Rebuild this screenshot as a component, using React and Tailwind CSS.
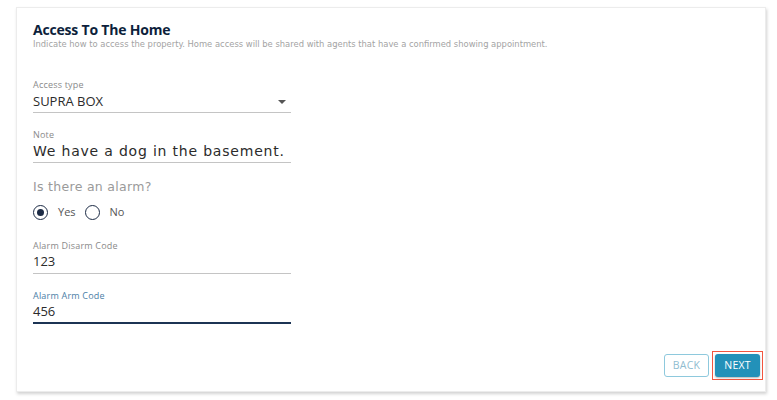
import { useState } from 'react';

function Field({ label, value, labelClass = 'text-[#8a8a8a]', lineClass = 'border-b border-[#c4c4c4]', valueClass = '', arrow = false }) {
  return (
    <div className="w-[258px]">
      <div className={`text-[9px] leading-[12px] tracking-[0.2px] ${labelClass}`}>{label}</div>
      <div className={`flex items-center justify-between h-[22px] ${lineClass}`}>
        <span className={`whitespace-nowrap text-[13px] text-[#2b2b2b] ${valueClass}`}>{value}</span>
        {arrow && (
          <svg width="10" height="6" viewBox="0 0 10 6" className="mr-[4px]">
            <path d="M1 1h8L5 5z" fill="#555" />
          </svg>
        )}
      </div>
    </div>
  );
}

function Radio({ checked, label }) {
  return (
    <label className="flex items-center gap-[10px]">
      <span className="w-[15px] h-[15px] rounded-full border-[1.5px] border-[#1c2b45] flex items-center justify-center">
        {checked && <span className="w-[7px] h-[7px] rounded-full bg-[#1c2b45]" />}
      </span>
      <span className="text-[11px] text-[#555]">{label}</span>
    </label>
  );
}

export default function App() {
  const [alarm] = useState(true);

  return (
    <div className="w-[777px] h-[400px] bg-white pt-[7px] pl-[16px] font-['Open_Sans',sans-serif]">
      <div className="w-[750px] h-[385px] bg-white border border-[#ececec] shadow-[1px_2px_3px_rgba(0,0,0,0.18)] flex flex-col">
        <div className="pl-[16px] flex flex-col">
          <h2 className="mt-[13px] text-[14px] leading-[18px] font-bold tracking-[-0.2px] text-[#0d1f3c]">Access To The Home</h2>
          <p className="text-[8.4px] leading-[10px] text-[#a3a3a3] font-['DejaVu_Sans',sans-serif]">
            Indicate how to access the property. Home access will be shared with agents that have a confirmed showing appointment.
          </p>

          <div className="mt-[30px]">
            <Field label="Access type" value="SUPRA BOX" arrow />
          </div>
          <div className="mt-[16px]">
            <Field
              label="Note"
              value="We have a dog in the basement."
              valueClass="font-['DejaVu_Sans',sans-serif] text-[14px] tracking-[0.8px]"
            />
          </div>

          <div className="mt-[15px] text-[12.5px] leading-[17px] text-[#9a9a9a] font-['DejaVu_Sans',sans-serif] tracking-[0.3px]">
            Is there an alarm?
          </div>
          <div className="mt-[9px] flex items-center gap-[9px]">
            <Radio checked={alarm} label="Yes" />
            <Radio checked={!alarm} label="No" />
          </div>

          <div className="mt-[19px]">
            <Field label="Alarm Disarm Code" value="123" />
          </div>
          <div className="mt-[16px]">
            <Field label="Alarm Arm Code" value="456" labelClass="text-[#4b7ea6]" lineClass="border-b-2 border-[#1c3454]" />
          </div>
        </div>

        <div className="mt-auto mb-[11px] pr-[2px] flex justify-end items-center gap-[3px]">
          <button className="w-[45px] h-[23px] rounded-[3px] border border-[#8ec9dd] text-[10.5px] tracking-[0.2px] text-[#8fbcd0] bg-white">
            BACK
          </button>
          <div className="p-[2px] border border-[#f2553f]">
            <button className="block w-[45px] h-[23px] rounded-[3px] bg-[#2391b9] text-[10.5px] tracking-[0.2px] text-white shadow-[0_1px_2px_rgba(0,0,0,0.3)]">
              NEXT
            </button>
          </div>
        </div>
      </div>
    </div>
  );
}
